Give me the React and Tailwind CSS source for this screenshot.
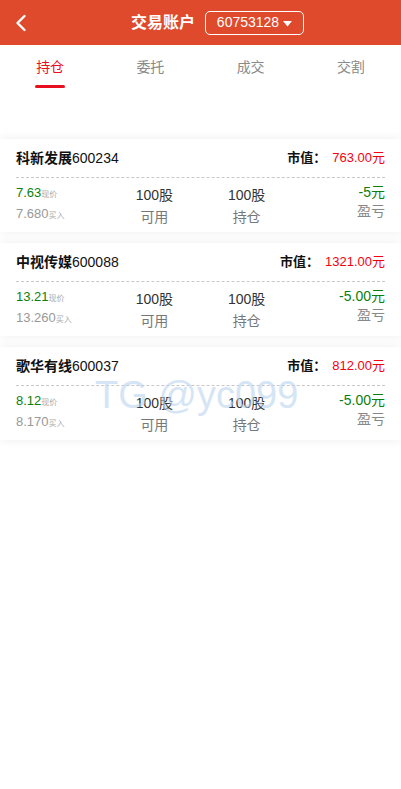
import React, { useState } from "react";

const positions = [
  { name: "科新发展", code: "600234", value: "763.00元", price: "7.63", cost: "7.680", avail: "100股", hold: "100股", pnl: "-5元" },
  { name: "中视传媒", code: "600088", value: "1321.00元", price: "13.21", cost: "13.260", avail: "100股", hold: "100股", pnl: "-5.00元" },
  { name: "歌华有线", code: "600037", value: "812.00元", price: "8.12", cost: "8.170", avail: "100股", hold: "100股", pnl: "-5.00元" },
];

const tabs = ["持仓", "委托", "成交", "交割"];

const font = { fontFamily: '"Liberation Sans", "Noto Sans CJK SC", sans-serif' };

const PositionCard = ({ item }) => (
  <div className="bg-white shadow-[0_0_10px_rgba(0,0,0,0.07)] mb-[11px] px-4">
    <div className="h-[39px] flex items-center justify-between border-b border-dashed border-[#c8c8c8]">
      <div className="text-[14px] text-[#111]">
        <span className="font-bold">{item.name}</span>
        {item.code}
      </div>
      <div className="text-[13px] flex items-center">
        <span className="font-bold text-[#111] mr-[6px]">市值：</span>
        <span className="text-[#f5000f]">{item.value}</span>
      </div>
    </div>
    <div className="grid grid-cols-4 pt-[5px] pb-[4px]">
      <div className="leading-[19px]">
        <div className="text-[13px] text-[#0b7f0b]">
          {item.price}
          <span className="text-[8px] text-[#aaa]">现价</span>
        </div>
        <div className="text-[13px] text-[#999]">
          {item.cost}
          <span className="text-[8px] text-[#aaa]">买入</span>
        </div>
      </div>
      <div className="text-center leading-[22px] mt-[1px] text-[14px]">
        <div className="text-[#333]">{item.avail}</div>
        <div className="text-[#777]">可用</div>
      </div>
      <div className="text-center leading-[22px] mt-[1px] text-[14px]">
        <div className="text-[#333]">{item.hold}</div>
        <div className="text-[#777]">持仓</div>
      </div>
      <div className="text-right leading-[19px] text-[14px]">
        <div className="text-[#0b7f0b]">{item.pnl}</div>
        <div className="text-[#888]">盈亏</div>
      </div>
    </div>
  </div>
);

export default function App() {
  const [active, setActive] = useState(0);

  return (
    <div className="relative w-[401px] min-h-[789px] bg-white" style={font}>
      {/* header */}
      <div className="h-[45px] bg-[#df4a2c] flex items-center">
        <div className="w-[34px] h-full flex items-center pl-[15px]">
          <svg width="12" height="18" viewBox="0 0 12 18" fill="none">
            <path d="M9.5 2 L2.5 9 L9.5 16" stroke="white" strokeWidth="2.4" strokeLinecap="round" strokeLinejoin="round" />
          </svg>
        </div>
        <div className="flex-1 flex items-center justify-center">
          <span className="text-white text-[16px] font-bold">交易账户</span>
          <div className="ml-[10px] h-[24px] w-[99px] border border-white rounded-[5px] flex items-center justify-center text-white text-[14px]">
            60753128
            <svg className="ml-[4px] mt-[2px]" width="9" height="6" viewBox="0 0 9 6">
              <path d="M0 0 H9 L4.5 5.5 Z" fill="white" />
            </svg>
          </div>
        </div>
      </div>

      {/* tabs */}
      <div className="h-[45px] grid grid-cols-4">
        {tabs.map((t, i) => (
          <button
            key={t}
            onClick={() => setActive(i)}
            className={`relative flex justify-center pt-[12px] text-[14px] ${
              i === active ? "text-[#e8101f]" : "text-[#8a8a8a]"
            }`}
          >
            {t}
            {i === active && (
              <span className="absolute left-[35px] top-[40px] w-[30px] h-[3px] rounded-full bg-[#e8101f]" />
            )}
          </button>
        ))}
      </div>

      {/* positions */}
      <div className="pt-[49px]">
        {positions.map((p) => (
          <PositionCard key={p.code} item={p} />
        ))}
      </div>

      {/* watermark */}
      <div className="absolute left-[95px] top-[367px] text-[38px] text-[#bcd4ef] opacity-60 pointer-events-none whitespace-nowrap">
        TG @yc099
      </div>
    </div>
  );
}
